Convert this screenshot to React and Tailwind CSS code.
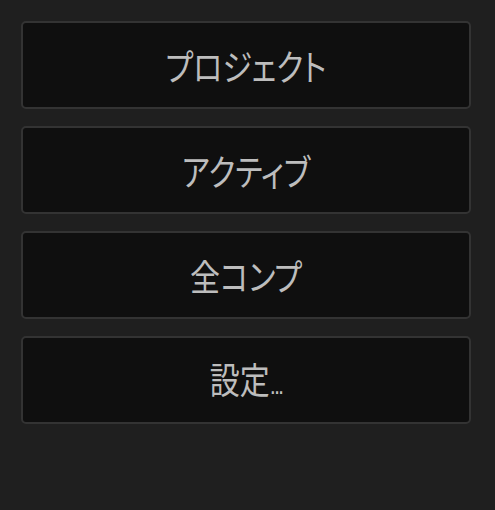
import React from "react";

const items = [
  { label: "プロジェクト" },
  { label: "アクティブ" },
  { label: "全コンプ" },
  { label: "設定", ellipsis: true },
];

function App() {
  return (
    <div className="w-[495px] h-[510px] bg-[#1f1f1f] pt-[21px] pl-[21px] pr-[24px]">
      <div className="flex flex-col gap-[17px]">
        {items.map((item) => (
          <button
            key={item.label}
            type="button"
            className="h-[88px] w-full rounded-[5px] border-2 border-[#333333] bg-[#0f0f0f] text-[#bdbdbd] flex items-center justify-center"
          >
            <span className="inline-block scale-y-[1.2] text-[30px] leading-none [font-family:'Noto_Sans_CJK_JP',sans-serif] [font-feature-settings:'palt']">
              {item.label}
              {item.ellipsis && (
                <span className="text-[22px] tracking-[-2px] [font-family:'Liberation_Sans',sans-serif]">...</span>
              )}
            </span>
          </button>
        ))}
      </div>
    </div>
  );
}

export default App;
